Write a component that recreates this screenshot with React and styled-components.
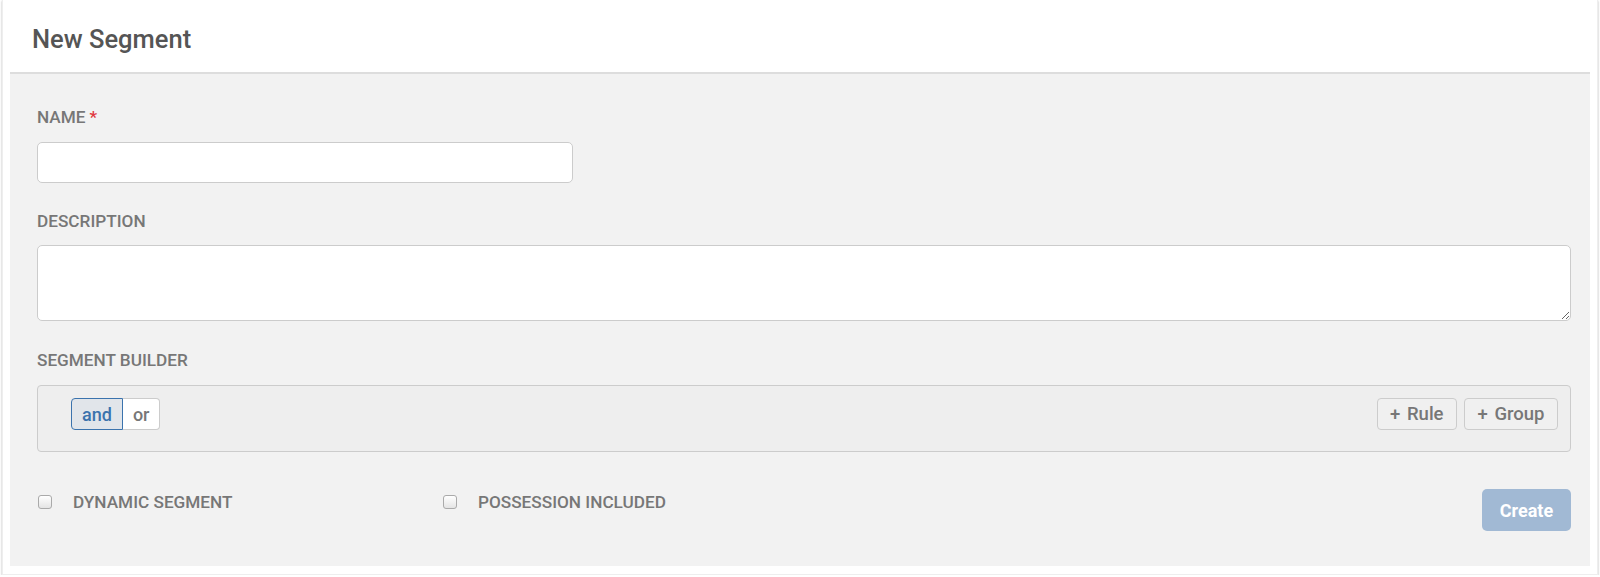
import React from 'react';
import styled, { createGlobalStyle } from 'styled-components';

const GlobalStyle = createGlobalStyle`
  html, body {
    margin: 0;
    padding: 0;
    background: #fff;
    font-family: Roboto, 'Liberation Sans', sans-serif;
  }
`;

const Page = styled.div`
  padding: 0 2px;
`;

const Card = styled.div`
  background: #fff;
  border: 1px solid #eee;
  border-top: none;
  padding: 0 7px 8px;
  box-shadow: 0 1px 2px rgba(0, 0, 0, 0.3);
`;

const Header = styled.div`
  padding: 24px 22px 18px;
  border-bottom: 2px solid #ddd;
`;

const Title = styled.h1`
  margin: 0;
  font-size: 25.5px;
  line-height: 30px;
  font-weight: 500;
  color: #555;
`;

const Body = styled.div`
  background: #f2f2f2;
  padding: 33px 19px 35px 27px;
`;

const Label = styled.div`
  font-size: 17.2px;
  line-height: 20px;
  font-weight: 500;
  color: #777;
  text-transform: uppercase;
  margin-top: ${(p) => p.mt || 0}px;
  margin-bottom: ${(p) => p.mb || 15}px;
`;

const Required = styled.span`
  color: #e0393e;
  margin-left: 4px;
`;

const TextInput = styled.input`
  display: block;
  box-sizing: border-box;
  width: 536px;
  height: 41px;
  border: 1px solid #ccc;
  border-radius: 5px;
  background: #fff;
  padding: 0 10px;
  font: inherit;
  outline: none;
`;

const TextArea = styled.textarea`
  display: block;
  box-sizing: border-box;
  width: 100%;
  height: 76px;
  border: 1px solid #ccc;
  border-radius: 5px;
  background: #fff;
  padding: 8px 10px;
  font: inherit;
  outline: none;
  resize: vertical;
`;

const Builder = styled.div`
  box-sizing: border-box;
  height: 67px;
  border: 1px solid #ccc;
  border-radius: 4px;
  background: #eee;
  padding: 12px 12px 0 33px;
  display: flex;
  align-items: flex-start;
  justify-content: space-between;
`;

const Combinator = styled.div`
  display: flex;
`;

const ComboButton = styled.button`
  box-sizing: border-box;
  height: 32px;
  padding: 0 10px;
  font-family: inherit;
  font-size: 18px;
  font-weight: 500;
  color: ${(p) => (p.active ? '#3b73ad' : '#777')};
  background: ${(p) => (p.active ? '#e1e5ea' : '#fff')};
  border: 1px solid ${(p) => (p.active ? '#3b73ad' : '#ccc')};
  border-radius: ${(p) => (p.active ? '4px 0 0 4px' : '0 4px 4px 0')};
  ${(p) => !p.active && 'border-left: none;'}
  cursor: pointer;
`;

const Actions = styled.div`
  display: flex;
  gap: 7px;
`;

const AddButton = styled.button`
  box-sizing: border-box;
  height: 32px;
  padding: 0 12.5px;
  font-family: inherit;
  font-size: 18.5px;
  font-weight: 500;
  color: #777;
  background: #f0f0f0;
  border: 1px solid #ccc;
  border-radius: 4px;
  word-spacing: 2px;
  cursor: pointer;
`;

const Footer = styled.div`
  margin-top: 37px;
  display: flex;
  align-items: flex-start;
`;

const Check = styled.label`
  width: ${(p) => p.w || 'auto'};
  display: flex;
  align-items: center;
  gap: 21px;
  margin-top: 3px;
  padding-left: 1px;
  font-size: 17.2px;
  line-height: 20px;
  font-weight: 500;
  color: #777;
  text-transform: uppercase;
`;

const Box = styled.span`
  box-sizing: border-box;
  width: 14px;
  height: 14px;
  border: 1px solid #aaa;
  border-radius: 3px;
  background: linear-gradient(#fff, #e4e4e4);
`;

const CreateButton = styled.button`
  margin-left: auto;
  box-sizing: border-box;
  width: 89px;
  height: 42px;
  border: none;
  border-radius: 5px;
  background: #a1b9d4;
  color: #fff;
  font-family: inherit;
  font-size: 18px;
  font-weight: 700;
`;

export default function App() {
  return (
    <Page>
      <GlobalStyle />
      <Card>
        <Header>
          <Title>New Segment</Title>
        </Header>
        <Body>
          <Label>
            Name<Required>*</Required>
          </Label>
          <TextInput />
          <Label mt={28} mb={14}>Description</Label>
          <TextArea />
          <Label mt={29}>Segment Builder</Label>
          <Builder>
            <Combinator>
              <ComboButton active>and</ComboButton>
              <ComboButton>or</ComboButton>
            </Combinator>
            <Actions>
              <AddButton>+ Rule</AddButton>
              <AddButton>+ Group</AddButton>
            </Actions>
          </Builder>
          <Footer>
            <Check w="404px">
              <Box />
              Dynamic Segment
            </Check>
            <Check>
              <Box />
              Possession Included
            </Check>
            <CreateButton>Create</CreateButton>
          </Footer>
        </Body>
      </Card>
    </Page>
  );
}
